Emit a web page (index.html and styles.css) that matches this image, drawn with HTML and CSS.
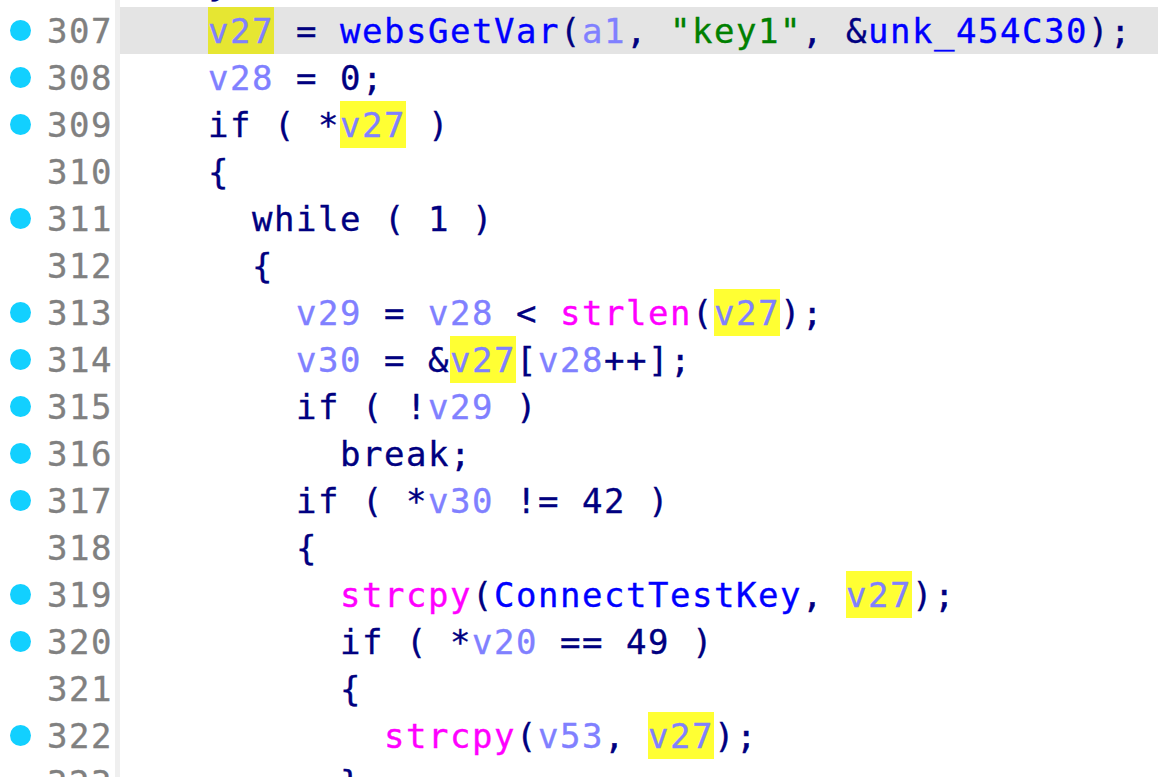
FILE: index.html
```html
<!DOCTYPE html>
<html>
<head>
<meta charset="utf-8">
<link rel="stylesheet" href="styles.css">
</head>
<body>
<div class="view">
  <div class="row"><div class="gutter"><span class="dot off"></span><span class="num">306</span></div><div class="code">    <span class="p">}</span></div></div>
  <div class="row cur"><div class="gutter"><span class="dot"></span><span class="num">307</span></div><div class="code">    <span class="v hl hlc">v27</span><span class="p"> = </span><span class="f">websGetVar</span><span class="p">(</span><span class="v">a1</span><span class="p">, </span><span class="s">"key1"</span><span class="p">, &amp;</span><span class="f">unk_454C30</span><span class="p">);</span></div></div>
  <div class="row"><div class="gutter"><span class="dot"></span><span class="num">308</span></div><div class="code">    <span class="v">v28</span><span class="p"> = 0;</span></div></div>
  <div class="row"><div class="gutter"><span class="dot"></span><span class="num">309</span></div><div class="code">    <span class="p">if ( *</span><span class="v hl">v27</span><span class="p"> )</span></div></div>
  <div class="row"><div class="gutter"><span class="dot off"></span><span class="num">310</span></div><div class="code">    <span class="p">{</span></div></div>
  <div class="row"><div class="gutter"><span class="dot"></span><span class="num">311</span></div><div class="code">      <span class="p">while ( 1 )</span></div></div>
  <div class="row"><div class="gutter"><span class="dot off"></span><span class="num">312</span></div><div class="code">      <span class="p">{</span></div></div>
  <div class="row"><div class="gutter"><span class="dot"></span><span class="num">313</span></div><div class="code">        <span class="v">v29</span><span class="p"> = </span><span class="v">v28</span><span class="p"> &lt; </span><span class="m">strlen</span><span class="p">(</span><span class="v hl">v27</span><span class="p">);</span></div></div>
  <div class="row"><div class="gutter"><span class="dot"></span><span class="num">314</span></div><div class="code">        <span class="v">v30</span><span class="p"> = &amp;</span><span class="v hl">v27</span><span class="p">[</span><span class="v">v28</span><span class="p">++];</span></div></div>
  <div class="row"><div class="gutter"><span class="dot"></span><span class="num">315</span></div><div class="code">        <span class="p">if ( !</span><span class="v">v29</span><span class="p"> )</span></div></div>
  <div class="row"><div class="gutter"><span class="dot"></span><span class="num">316</span></div><div class="code">          <span class="p">break;</span></div></div>
  <div class="row"><div class="gutter"><span class="dot"></span><span class="num">317</span></div><div class="code">        <span class="p">if ( *</span><span class="v">v30</span><span class="p"> != 42 )</span></div></div>
  <div class="row"><div class="gutter"><span class="dot off"></span><span class="num">318</span></div><div class="code">        <span class="p">{</span></div></div>
  <div class="row"><div class="gutter"><span class="dot"></span><span class="num">319</span></div><div class="code">          <span class="m">strcpy</span><span class="p">(</span><span class="f">ConnectTestKey</span><span class="p">, </span><span class="v hl">v27</span><span class="p">);</span></div></div>
  <div class="row"><div class="gutter"><span class="dot"></span><span class="num">320</span></div><div class="code">          <span class="p">if ( *</span><span class="v">v20</span><span class="p"> == 49 )</span></div></div>
  <div class="row"><div class="gutter"><span class="dot off"></span><span class="num">321</span></div><div class="code">          <span class="p">{</span></div></div>
  <div class="row"><div class="gutter"><span class="dot"></span><span class="num">322</span></div><div class="code">            <span class="m">strcpy</span><span class="p">(</span><span class="v">v53</span><span class="p">, </span><span class="v hl">v27</span><span class="p">);</span></div></div>
  <div class="row"><div class="gutter"><span class="dot off"></span><span class="num">323</span></div><div class="code">          <span class="p">}</span></div></div>
</div>
</body>
</html>
```

FILE: styles.css
```css
html, body {
  margin: 0;
  padding: 0;
  background: #ffffff;
  overflow: hidden;
}
.view {
  margin-top: -40px;
  font-family: "DejaVu Sans Mono", monospace;
  font-size: 34px;
  letter-spacing: 1.53px;
  -webkit-text-stroke: 0.35px;
}
.row {
  display: flex;
  height: 47px;
}
.gutter {
  width: 115px;
  flex: none;
  display: flex;
  align-items: center;
  border-right: 5px solid #efefef;
  box-sizing: content-box;
}
.dot {
  width: 21px;
  height: 21px;
  border-radius: 50%;
  background: #12d0ff;
  margin-left: 10px;
  flex: none;
}
.dot.off {
  background: transparent;
}
.num {
  flex: 1;
  text-align: right;
  padding-right: 2px;
  padding-top: 2px;
  line-height: 45px;
  height: 45px;
  align-self: flex-start;
  color: #808080;
}
.code {
  flex: 1;
  white-space: pre;
  color: #000080;
  padding-top: 2px;
  line-height: 45px;
}
.row.cur .code {
  background: #e4e4e4;
}
.p { color: #000080; }
.v { color: #8080ff; }
.f { color: #0000ff; }
.s { color: #008000; }
.m { color: #ff00ff; }
.hl {
  background: #ffff33;
  display: inline-block;
  vertical-align: top;
  margin-top: -2px;
  padding-top: 2px;
  height: 45px;
  line-height: 45px;
}
.hlc {
  background: #e6e632;
}
```
